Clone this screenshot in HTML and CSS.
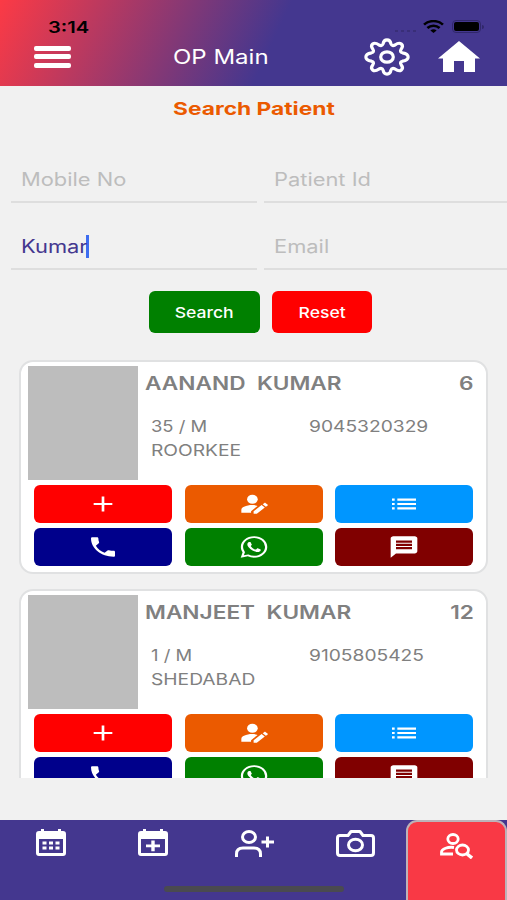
FILE: index.html
```html
<!DOCTYPE html>
<html lang="en">
<head>
  <meta charset="UTF-8">
  <meta name="viewport" content="width=device-width, initial-scale=1">
  <title>OP Main</title>
  <link rel="stylesheet" href="styles.css">
</head>
<body>
  <!-- icons used more than once -->
  <svg class="defs">
    <symbol id="plus" viewBox="0 0 24 24" preserveAspectRatio="none"><path d="M19 13h-6v6h-2v-6H5v-2h6V5h2v6h6z"/></symbol>
    <symbol id="edit" viewBox="0 0 24 24" preserveAspectRatio="none"><path d="M2.500 17.500c0-1.500.8-2.300 2-2.900C6.500 13.500 8.500 13 10.500 13c1.600 0 3 .3 4.200.8L9.800 18.600V20H2.500z"/><ellipse cx="10.800" cy="7.600" rx="4" ry="4.200"/><path d="M11.700 21v-2.300l6-5.700 2.400 2.300-6 5.700zM20.900 14.500l-2.400-2.300 1.100-1c.4-.4.8-.4 1.200 0l1.300 1.200c.4.400.4.800 0 1.100z"/></symbol>
    <symbol id="list" viewBox="0 0 24 24" preserveAspectRatio="none"><path d="M3 13h2v-2H3v2zm0 4h2v-2H3v2zm0-8h2V7H3v2zm4 4h14v-2H7v2zm0 4h14v-2H7v2zM7 7v2h14V7H7z"/></symbol>
    <symbol id="call" viewBox="0 0 24 24" preserveAspectRatio="none"><path d="M6.620 10.790c1.440 2.830 3.760 5.140 6.590 6.590l2.200-2.200c.27-.27.67-.36 1.020-.24 1.120.37 2.330.57 3.570.57.55 0 1 .45 1 1V20c0 .55-.45 1-1 1-9.390 0-17-7.610-17-17 0-.55.45-1 1-1h3.500c.55 0 1 .45 1 1 0 1.250.2 2.450.57 3.570.11.35.03.74-.25 1.020l-2.200 2.200z"/></symbol>
    <symbol id="whatsapp" viewBox="0 0 24 24" preserveAspectRatio="none"><path d="M19.050 4.910A9.816 9.816 0 0 0 12.040 2c-5.460 0-9.910 4.450-9.910 9.910 0 1.750.46 3.450 1.320 4.950L2.050 22l5.250-1.380c1.450.79 3.080 1.210 4.740 1.210 5.460 0 9.910-4.450 9.910-9.910 0-2.650-1.030-5.140-2.900-7.010zm-7.010 15.240c-1.480 0-2.930-.4-4.200-1.150l-.3-.18-3.120.82.830-3.040-.2-.31a8.264 8.264 0 0 1-1.260-4.380c0-4.540 3.700-8.240 8.240-8.240 2.200 0 4.270.86 5.820 2.420a8.183 8.183 0 0 1 2.410 5.830c.02 4.540-3.680 8.230-8.220 8.230zm4.520-6.160c-.25-.12-1.470-.72-1.690-.81-.23-.08-.39-.12-.56.12-.17.25-.64.81-.78.97-.14.17-.29.19-.54.06-.25-.12-1.050-.39-1.990-1.230-.74-.66-1.230-1.470-1.380-1.720-.14-.25-.02-.38.11-.51.11-.11.25-.29.37-.43s.17-.25.25-.41c.08-.17.04-.31-.02-.43s-.56-1.340-.76-1.840c-.2-.48-.41-.42-.56-.43h-.48c-.17 0-.43.06-.66.31-.22.25-.86.85-.86 2.070 0 1.220.89 2.400 1.010 2.560.12.17 1.750 2.670 4.230 3.740.59.26 1.050.41 1.410.52.59.19 1.130.16 1.560.1.48-.07 1.470-.6 1.670-1.180.21-.58.21-1.070.14-1.180s-.22-.16-.47-.28z"/></symbol>
    <symbol id="message" viewBox="0 0 24 24" preserveAspectRatio="none"><path d="M20 2H4c-1.100 0-1.990.9-1.990 2L2 22l4-4h14c1.100 0 2-.9 2-2V4c0-1.100-.9-2-2-2zm-2 12H6v-2h12v2zm0-3H6V9h12v2zm0-3H6V6h12v2z"/></symbol>
  </svg>

  <header class="header">
    <div class="status">
      <span class="clock"><span class="wide">3:14</span></span>
      <span class="signal"><i></i><i></i><i></i><i></i></span>
      <svg class="wifi" viewBox="0 0 20 13" preserveAspectRatio="none" fill="none" stroke="#000" stroke-width="2.500">
        <path d="M1 4.700a13 13 0 0 1 18 0M4.200 8a8.500 8.500 0 0 1 11.600 0"/>
        <path d="M7 10.500a4.500 4.500 0 0 1 6 0L10 13z" fill="#000" stroke="none"/>
      </svg>
      <span class="battery"><b></b></span>
      <span class="battery-tip"></span>
    </div>
    <div class="topbar">
      <div class="menu"><span></span><span></span><span></span></div>
      <h1 class="title"><span class="wide">OP Main</span></h1>
      <svg class="gear" viewBox="0 0 46 38" preserveAspectRatio="none" fill="none" stroke="#fff" stroke-width="3.200" stroke-linejoin="round">
        <path d="M19 6C20 0.500 26 0.500 27 6Q28 8.500 31 7C36.500 3 40.500 7 37 11.500Q35.500 14 38.500 14.800C46 16 46 22 38.500 23.200Q35.500 24 37 26.500C40.500 31 36.500 35 31 31Q28 29.500 27 32C26 37.500 20 37.500 19 32Q18 29.500 15 31C9.500 35 5.500 31 9 26.500Q10.500 24 7.500 23.200C0 22 0 16 7.500 14.800Q10.500 14 9 11.500C5.500 7 9.500 3 15 7Q18 8.500 19 6Z"/>
        <ellipse cx="23" cy="19" rx="6.300" ry="5.200"/>
      </svg>
      <svg class="home" viewBox="0 0 42 31" preserveAspectRatio="none" fill="#fff">
        <path d="M21 0 42 17.500H37V31H26V20H16V31H5V17.500H0z"/>
      </svg>
    </div>
  </header>

  <main class="content">
    <h2 class="heading"><span class="wide">Search Patient</span></h2>

    <div class="fields">
      <div class="field"><span class="wide">Mobile No</span></div>
      <div class="field"><span class="wide">Patient Id</span></div>
      <div class="field filled"><span class="wide">Kumar</span></div>
      <div class="field"><span class="wide">Email</span></div>
    </div>

    <div class="buttons">
      <button class="btn search"><span class="wide">Search</span></button>
      <button class="btn reset"><span class="wide">Reset</span></button>
    </div>

    <div class="results">
      <div class="card">
        <div class="patient">
          <div class="photo"></div>
          <div class="info">
            <div class="name"><span class="wide">AANAND&nbsp; KUMAR</span><span class="wide num">6</span></div>
            <div class="row"><span class="age"><span class="wide">35 / M</span></span><span class="wide">9045320329</span></div>
            <div class="row"><span class="wide">ROORKEE</span></div>
          </div>
        </div>
        <div class="actions">
          <div class="action red"><svg><use href="#plus"/></svg></div>
          <div class="action orange"><svg><use href="#edit"/></svg></div>
          <div class="action blue"><svg><use href="#list"/></svg></div>
          <div class="action navy"><svg><use href="#call"/></svg></div>
          <div class="action green"><svg><use href="#whatsapp"/></svg></div>
          <div class="action maroon"><svg><use href="#message"/></svg></div>
        </div>
      </div>

      <div class="card">
        <div class="patient">
          <div class="photo"></div>
          <div class="info">
            <div class="name"><span class="wide">MANJEET&nbsp; KUMAR</span><span class="wide num">12</span></div>
            <div class="row"><span class="age"><span class="wide">1 / M</span></span><span class="wide">9105805425</span></div>
            <div class="row"><span class="wide">SHEDABAD</span></div>
          </div>
        </div>
        <div class="actions">
          <div class="action red"><svg><use href="#plus"/></svg></div>
          <div class="action orange"><svg><use href="#edit"/></svg></div>
          <div class="action blue"><svg><use href="#list"/></svg></div>
          <div class="action navy"><svg><use href="#call"/></svg></div>
          <div class="action green"><svg><use href="#whatsapp"/></svg></div>
          <div class="action maroon"><svg><use href="#message"/></svg></div>
        </div>
      </div>
    </div>
  </main>

  <nav class="tabs">
    <a class="tab">
      <svg width="30" height="27" viewBox="0 0 30 27" fill="#fff"><path fill-rule="evenodd" d="M5 0h3v2h14V0h3v2h2q3 0 3 3v19q0 3-3 3H3q-3 0-3-3V5q0-3 3-3h2zM3 10v14h24V10z"/><path d="M6.500 12.500h4v3h-4zm6.500 0h4v3h-4zm6.500 0h4v3h-4zm-13 5h4v3h-4zm6.500 0h4v3h-4zm6.500 0h4v3h-4z"/></svg>
    </a>
    <a class="tab">
      <svg width="30" height="27" viewBox="0 0 30 27" fill="#fff"><path fill-rule="evenodd" d="M5 0h3v2h14V0h3v2h2q3 0 3 3v19q0 3-3 3H3q-3 0-3-3V5q0-3 3-3h2zM3 10v14h24V10z"/><path d="M13.300 11.500h3.400v4H22v2.700h-5.300v4h-3.400v-4H8v-2.700h5.300z"/></svg>
    </a>
    <a class="tab">
      <svg width="39" height="28" viewBox="0 0 39 28" fill="none" stroke="#fff" stroke-width="3"><ellipse cx="14" cy="8" rx="6.500" ry="5.500"/><path d="M1.500 28v-3q0-6 6.500-6h11q6.500 0 6.500 6v3M32.500 7.500v11M26.500 13H39"/></svg>
    </a>
    <a class="tab">
      <svg width="39" height="28" viewBox="0 0 39 28" fill="none" stroke="#fff" stroke-width="3" stroke-linejoin="round"><path d="M4 6.500h8L15 2.500h9l3 4h8q2.500 0 2.500 2.500v15q0 2.500-2.500 2.500H4Q1.500 26.500 1.500 24V9Q1.500 6.500 4 6.500z"/><ellipse cx="19.500" cy="16" rx="7" ry="5.800"/></svg>
    </a>
    <a class="tab active">
      <svg width="33" height="26" viewBox="0 0 33 26" fill="none" stroke="#fff" stroke-width="2.800"><ellipse cx="13" cy="6" rx="5.200" ry="4.500"/><path d="M14 14.500C8 13.500 1.500 16 1.500 19v2H13"/><ellipse cx="22.500" cy="17" rx="6" ry="5"/><path d="m26.500 20.500 5.500 4.500" stroke-width="3.400"/></svg>
    </a>
    <div class="home-indicator"></div>
  </nav>
</body>
</html>
```
FILE: styles.css
```css
* {
  box-sizing: border-box;
}

body {
  margin: 0;
  height: 900px;
  display: flex;
  flex-direction: column;
  overflow: hidden;
  background-color: #f1f1f1;
  color: #808080;
  font-family: Inter, "Liberation Sans", sans-serif;
}

.defs {
  position: absolute;
  width: 0;
  height: 0;
}

/* stretched lettering */
.wide {
  display: inline-block;
  white-space: nowrap;
  transform: scaleX(1.2);
  transform-origin: left center;
}

.header {
  height: 86px;
  flex-shrink: 0;
  background: linear-gradient(115deg, #fc3a45 0%, #44378f 53.500%);
}

.status {
  display: flex;
  align-items: center;
  height: 37px;
  padding: 16px 23px 0 48px;
  color: #000;
}

.clock {
  flex: 1;
  font-size: 16px;
  font-weight: 600;
}

.clock .wide {
  transform: scaleX(1.260);
}

.signal {
  display: flex;
  gap: 3px;
  margin: 9px 7px 0 0;
}

.signal i {
  width: 3px;
  height: 2px;
  background-color: #392e78;
}

.wifi {
  width: 21px;
  height: 13px;
  margin-right: 8px;
}

.battery {
  width: 29px;
  height: 13px;
  padding: 1px;
  border: 1px solid #30276a;
  border-radius: 4px;
}

.battery b {
  display: block;
  height: 100%;
  border-radius: 2px;
  background-color: #000;
}

.battery-tip {
  width: 2px;
  height: 4px;
  margin-left: 1px;
  border-radius: 0 2px 2px 0;
  background-color: #30276a;
}

.topbar {
  display: flex;
  align-items: center;
  height: 39px;
  padding: 0 27px 0 34px;
}

.menu {
  display: flex;
  flex-direction: column;
  gap: 3.500px;
  width: 139px;
}

.menu span {
  width: 37px;
  height: 5px;
  border-radius: 2px;
  background-color: #fff;
}

.title {
  flex: 1;
  margin: 0;
  font-size: 20px;
  font-weight: 400;
  color: #fff;
}

.gear {
  width: 46px;
  height: 38px;
  margin-right: 28px;
}

.home {
  width: 42px;
  height: 31px;
}

.content {
  flex: 1;
  min-height: 0;
}

.heading {
  margin: 0;
  padding: 10px 0 0 173px;
  font-size: 18px;
  line-height: 26px;
  font-weight: 700;
  color: #eb5a00;
}

.heading .wide {
  transform: scaleX(1.265);
}

.fields {
  display: grid;
  grid-template-columns: 246px 246px;
  gap: 0 7px;
  padding: 14px 0 0 11px;
}

.field {
  height: 67px;
  padding: 33px 0 0 10px;
  border-bottom: 2px solid #dedede;
  font-size: 18px;
  line-height: 22px;
  color: #bdbdbd;
}

.field .wide {
  transform: scaleX(1.215);
}

.filled {
  color: #44378f;
}

/* text cursor */
.filled::after {
  content: "";
  display: inline-block;
  width: 3px;
  height: 23px;
  margin: -3px 0 0 10px;
  vertical-align: middle;
  background-color: #3d6df0;
}

.buttons {
  display: flex;
  gap: 12px;
  padding: 21px 0 0 149px;
}

.btn {
  height: 42px;
  padding: 0;
  border: none;
  border-radius: 6px;
  font-family: inherit;
  font-size: 15px;
  font-weight: 500;
  color: #fff;
}

.btn .wide {
  transform: scaleX(1.170);
  transform-origin: center;
}

.search {
  width: 111px;
  background-color: #008000;
}

.reset {
  width: 100px;
  background-color: #f00;
}

.results {
  height: 418px;
  margin-top: 27px;
  overflow: hidden;
}

.card {
  width: 469px;
  height: 214px;
  margin: 0 0 15px 19px;
  padding: 4px 7px;
  border: 2px solid #e0e1e2;
  border-radius: 14px;
  background-color: #fff;
}

.patient {
  display: flex;
  height: 114px;
}

.photo {
  width: 110px;
  background-color: #bdbdbd;
}

.info {
  flex: 1;
  padding: 5px 5px 0 7px;
}

.name {
  display: flex;
  justify-content: space-between;
  margin-bottom: 17px;
  font-size: 18px;
  line-height: 26px;
  font-weight: 600;
}

.name .wide {
  transform: scaleX(1.258);
}

.name .num {
  transform-origin: right center;
}

.row {
  display: flex;
  padding-left: 6px;
  font-size: 16px;
  line-height: 24px;
}

.age {
  width: 158px;
}

.age .wide {
  transform: scaleX(1.150);
}

.actions {
  display: grid;
  grid-template-columns: repeat(3, 138px);
  gap: 5px 12.500px;
  padding: 5px 0 0 6px;
}

.action {
  display: flex;
  align-items: center;
  justify-content: center;
  height: 38px;
  border-radius: 6px;
}

.action svg {
  width: 32px;
  height: 26px;
  fill: #fff;
}

.red { background-color: #f00; }
.orange { background-color: #eb5a00; }
.blue { background-color: #0096ff; }
.navy { background-color: #00008b; }
.green { background-color: #008000; }
.maroon { background-color: #800000; }

.tabs {
  position: relative;
  display: flex;
  height: 80px;
  flex-shrink: 0;
  background-color: #44378f;
}

.tab {
  display: flex;
  justify-content: center;
  align-items: flex-start;
  width: 101.500px;
  padding: 9px 0 0 1px;
}

.active {
  padding: 11px 0 0;
  border: 2px solid #bdb2b8;
  border-bottom: none;
  border-radius: 11px 11px 0 0;
  background-color: #f93945;
}

.home-indicator {
  position: absolute;
  left: 164px;
  bottom: 8px;
  width: 180px;
  height: 6px;
  border-radius: 3px;
  background-color: #4a4a50;
}
```
